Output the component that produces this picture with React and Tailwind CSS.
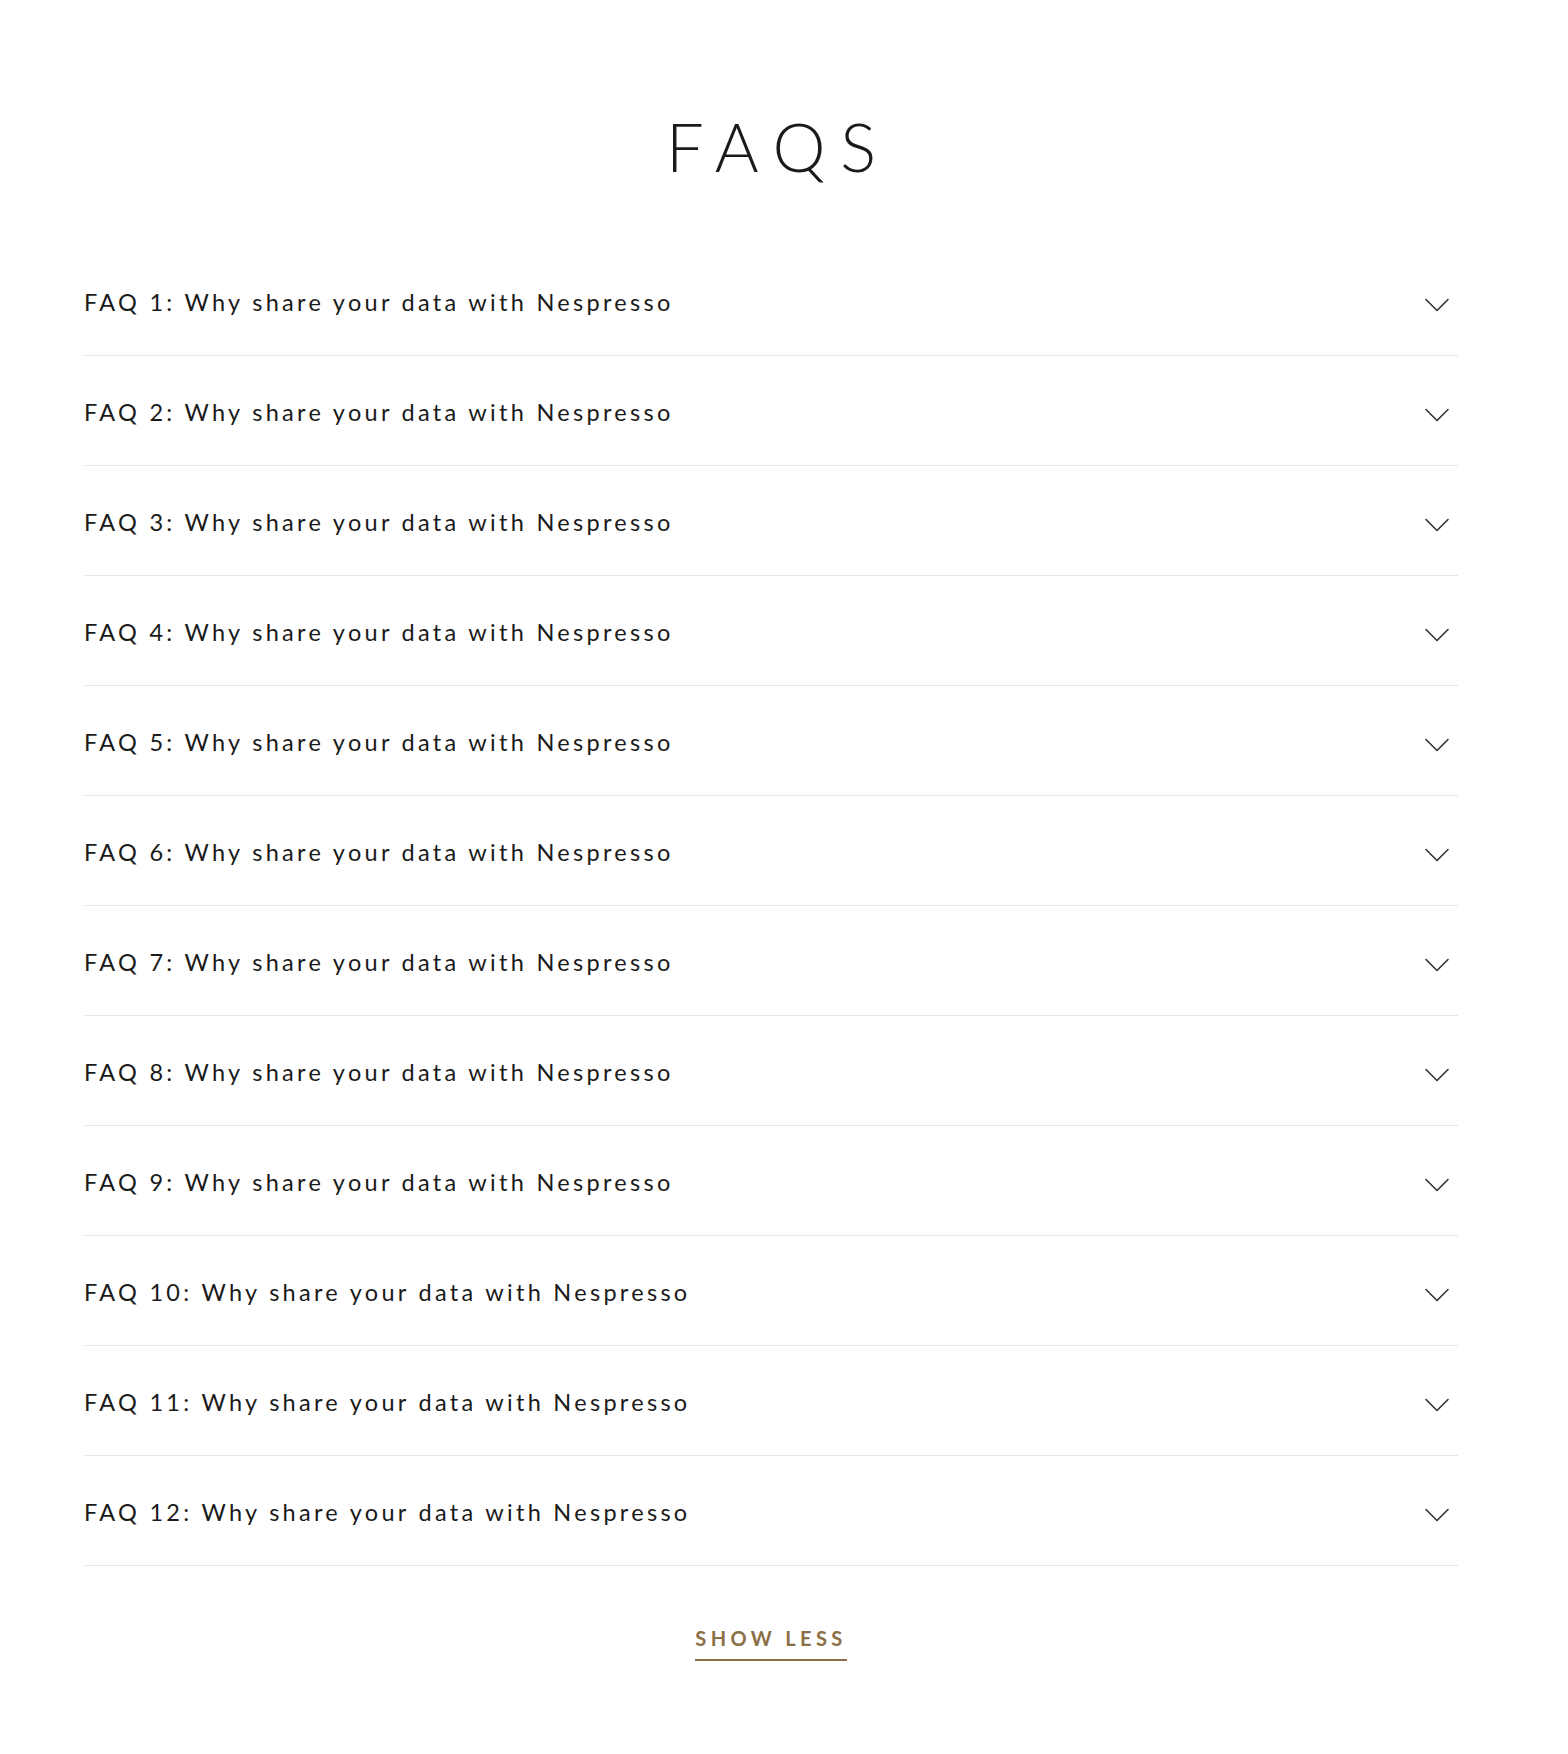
import React from "react";

const faqs = Array.from({ length: 12 }, (_, i) => ({
  id: i + 1,
  question: `FAQ ${i + 1}: Why share your data with Nespresso`,
}));

const Chevron = () => (
  <svg
    width="24"
    height="14"
    viewBox="0 0 24 14"
    fill="none"
    stroke="#333333"
    strokeWidth="1.6"
    strokeLinecap="round"
    strokeLinejoin="round"
  >
    <path d="M1 1.5 L12 12.5 L23 1.5" />
  </svg>
);

const FaqRow = ({ question }) => (
  <div className="flex h-[110px] items-center justify-between border-b border-[#e6e6e6]">
    <span className="pt-[4px] text-[23.5px] tracking-[0.14em] text-[#1a1a1a]">
      {question}
    </span>
    <div className="mr-[9px] flex items-center pt-[8px]">
      <Chevron />
    </div>
  </div>
);

export default function App() {
  return (
    <div className="min-h-[1754px] bg-white font-['Lato',sans-serif]">
      <div className="ml-[84px] w-[1374px] pt-[113px] pb-[90px]">
        {/* Title */}
        <h1 className="pl-[0.22em] text-center text-[67px] font-light leading-none tracking-[0.22em] text-[#1a1a1a]">
          FAQS
        </h1>

        {/* List */}
        <div className="mt-[66px]">
          {faqs.map((faq) => (
            <FaqRow key={faq.id} question={faq.question} />
          ))}
        </div>

        {/* Toggle */}
        <div className="mt-[62px] flex justify-center">
          <button className="border-b-2 border-[#8b6f47] pb-[11px] text-[20px] font-bold leading-none tracking-[0.22em] text-[#8b6f47]">
            SHOW LESS
          </button>
        </div>
      </div>
    </div>
  );
}
